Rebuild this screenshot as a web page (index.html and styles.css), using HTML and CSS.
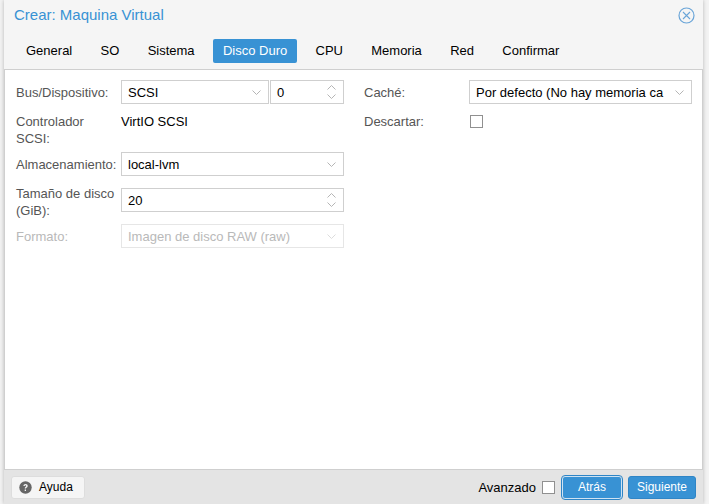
FILE: index.html
```html
<!DOCTYPE html>
<html lang="es">
<head>
    <meta charset="UTF-8">
    <meta name="viewport" content="width=device-width, initial-scale=1.0">
    <title>Crear: Maquina Virtual</title>
    <link rel="stylesheet" href="styles.css">
</head>
<body>
    <div class="dialog">
        <div class="header">
            <span class="title">Crear: Maquina Virtual</span>
            <svg class="close" width="17" height="17" viewBox="0 0 17 17">
                <circle cx="8.5" cy="8.5" r="7.5" fill="none" stroke="#6aa5d8" stroke-width="1.2"/>
                <path d="M5 5l7 7M12 5l-7 7" fill="none" stroke="#6aa5d8" stroke-width="1.1"/>
            </svg>
        </div>

        <div class="tabs">
            <span class="tab">General</span>
            <span class="tab">SO</span>
            <span class="tab">Sistema</span>
            <span class="tab active">Disco Duro</span>
            <span class="tab">CPU</span>
            <span class="tab">Memoria</span>
            <span class="tab">Red</span>
            <span class="tab">Confirmar</span>
        </div>

        <div class="panel">
            <div class="column">
                <div class="row">
                    <label class="label">Bus/Dispositivo:</label>
                    <div class="pair">
                        <div class="field bus">
                            <span class="value">SCSI</span>
                            <svg class="chevron" width="9" height="5" viewBox="0 0 9 5"><path d="M.5.5l4 4 4-4" fill="none" stroke="#b5b5b5"/></svg>
                        </div>
                        <div class="field device">
                            <span class="value">0</span>
                            <svg class="spin" width="9" height="14" viewBox="0 0 9 14"><path d="M.5 4.5l4-4 4 4M.5 9.5l4 4 4-4" fill="none" stroke="#b5b5b5"/></svg>
                        </div>
                    </div>
                </div>
                <div class="row text-row">
                    <label class="label">Controlador SCSI:</label>
                    <span class="static">VirtIO SCSI</span>
                </div>
                <div class="row">
                    <label class="label">Almacenamiento:</label>
                    <div class="field">
                        <span class="value">local-lvm</span>
                        <svg class="chevron" width="9" height="5" viewBox="0 0 9 5"><path d="M.5.5l4 4 4-4" fill="none" stroke="#b5b5b5"/></svg>
                    </div>
                </div>
                <div class="row size-row">
                    <label class="label">Tamaño de disco (GiB):</label>
                    <div class="field">
                        <span class="value">20</span>
                        <svg class="spin" width="9" height="14" viewBox="0 0 9 14"><path d="M.5 4.5l4-4 4 4M.5 9.5l4 4 4-4" fill="none" stroke="#b5b5b5"/></svg>
                    </div>
                </div>
                <div class="row disabled">
                    <label class="label">Formato:</label>
                    <div class="field">
                        <span class="value">Imagen de disco RAW (raw)</span>
                        <svg class="chevron" width="9" height="5" viewBox="0 0 9 5"><path d="M.5.5l4 4 4-4" fill="none" stroke="#dcdcdc"/></svg>
                    </div>
                </div>
            </div>
            <div class="column">
                <div class="row">
                    <label class="label">Caché:</label>
                    <div class="field">
                        <span class="value">Por defecto (No hay memoria ca</span>
                        <svg class="chevron" width="9" height="5" viewBox="0 0 9 5"><path d="M.5.5l4 4 4-4" fill="none" stroke="#b5b5b5"/></svg>
                    </div>
                </div>
                <div class="row text-row">
                    <label class="label">Descartar:</label>
                    <span class="check discard-check"></span>
                </div>
            </div>
        </div>

        <div class="footer">
            <button class="btn help">
                <svg width="13" height="13" viewBox="0 0 13 13">
                    <circle cx="6.5" cy="6.5" r="6.2" fill="#666"/>
                    <path d="M4.4 5.1c0-1.3 1-2 2.2-2s2.1.7 2.1 1.8c0 1.6-1.7 1.5-1.7 2.7H5.7c0-1.8 1.5-1.8 1.5-2.6 0-.4-.3-.7-.7-.7-.5 0-.8.4-.8.8zM5.7 8.4H7V10H5.7z" fill="#f5f5f5"/>
                </svg>
                Ayuda
            </button>
            <span class="advanced">Avanzado</span>
            <span class="check adv-check"></span>
            <button class="btn primary back">Atrás</button>
            <button class="btn primary">Siguiente</button>
        </div>
    </div>
</body>
</html>
```

FILE: styles.css
```css
html, body {
    height: 100%;
}

body {
    margin: 0;
    background-color: #f3f3f3;
    font-family: "Liberation Sans", Arial, sans-serif;
    font-size: 13px;
    color: #000;
    overflow: hidden;
}

.dialog {
    width: 699px;
    height: 504px;
    margin-left: 4px;
    background-color: #f5f5f5;
    box-shadow: 0 0 4px rgba(0, 0, 0, 0.25);
    display: flex;
    flex-direction: column;
}

.header {
    height: 31px;
    padding: 0 8px 0 10px;
    display: flex;
    justify-content: space-between;
    align-items: center;
}

.title {
    color: #3892d4;
    font-size: 15px;
    line-height: 30px;
    margin-bottom: 2px;
}

.tabs {
    height: 38px;
    padding: 8px 0 0 12px;
    box-sizing: border-box;
    display: flex;
}

.tab {
    height: 24px;
    line-height: 24px;
    padding: 0 10px;
    margin-right: 8.3px;
    border-radius: 2px;
}

.tab.active {
    background-color: #3892d4;
    color: #fff;
}

.panel {
    flex: 1;
    background-color: #fff;
    border: 1px solid #cfcfcf;
    padding: 10px 10px 0 11px;
    display: flex;
    gap: 20px;
}

.column {
    width: 328px;
    display: flex;
    flex-direction: column;
}

.row {
    display: flex;
    align-items: center;
    height: 24px;
    margin-bottom: 12px;
}

.label {
    width: 105px;
    flex-shrink: 0;
    padding-top: 1px;
    line-height: 17px;
    color: #555;
}

.text-row {
    height: 33px;
    margin-top: -3px;
    margin-bottom: 6px;
    align-items: flex-start;
}

.text-row .label {
    padding-top: 0;
}

.size-row .label {
    padding-top: 4px;
}

.pair {
    flex: 1;
    display: flex;
    gap: 1px;
}

.field {
    flex: 1;
    height: 24px;
    box-sizing: border-box;
    border: 1px solid #cfcfcf;
    background-color: #fff;
    padding: 0 7px 0 6px;
    display: flex;
    justify-content: space-between;
    align-items: center;
}

.bus {
    flex: none;
    width: 148px;
}

.device {
    flex: none;
    width: 74px;
}

.static {
    line-height: 17px;
}

.check {
    width: 13px;
    height: 13px;
    box-sizing: border-box;
    border: 1px solid #909090;
    background-color: #fff;
    display: block;
}

.discard-check {
    margin-top: 2px;
    margin-left: 1px;
}

.disabled .label,
.disabled .value {
    color: #b9b9b9;
}

.disabled .field {
    border-color: #e6e6e6;
}

.footer {
    height: 34px;
    box-sizing: border-box;
    background-color: #e4e4e4;
    padding: 0 7px;
    display: flex;
    align-items: center;
}

.btn {
    height: 23px;
    font-family: inherit;
    font-size: 12px;
    border-radius: 3px;
    padding: 0;
}

.help {
    width: 74px;
    margin-right: auto;
    padding-left: 7px;
    background-color: #f5f5f5;
    border: 1px solid #ddd;
    color: #000;
    display: flex;
    align-items: center;
    gap: 7px;
}

.advanced {
    margin-right: 6px;
}

.adv-check {
    margin-right: 7px;
}

.primary {
    width: 68px;
    background-color: #3892d4;
    border: 1px solid #2f85c6;
    color: #fff;
    margin-left: 6px;
}

.back {
    width: 60px;
    margin-left: 0;
    outline: 1px solid #2f85c6;
    outline-offset: 0;
    border-color: #cfe3f3;
}
```
